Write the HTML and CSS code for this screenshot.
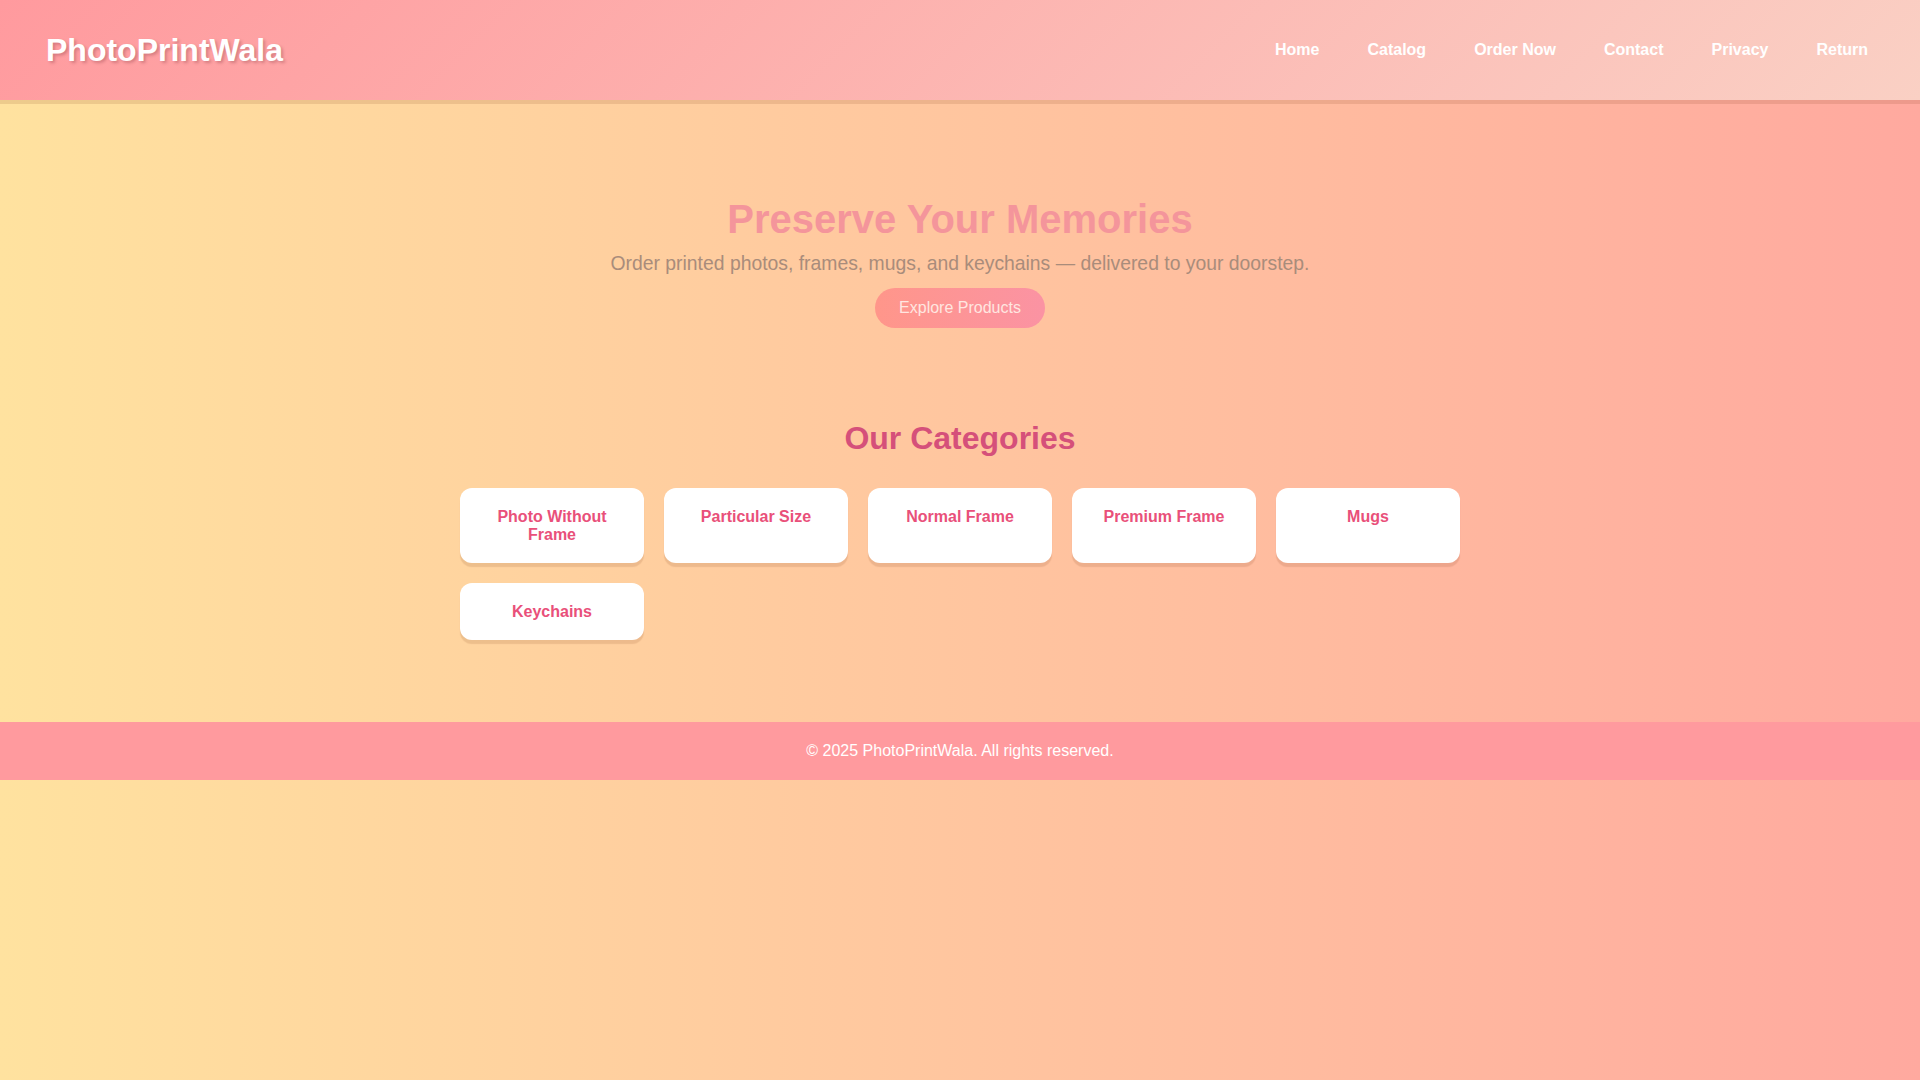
FILE: index.html
```html
<!DOCTYPE html>
<html lang="en">
<head>
<meta charset="utf-8">
<title>PhotoPrintWala</title>
<link rel="stylesheet" href="styles.css">
</head>
<body>
<header class="site-header">
  <div class="logo">PhotoPrintWala</div>
  <nav class="nav">
    <a href="#" class="nav-link">Home</a>
    <a href="#" class="nav-link">Catalog</a>
    <a href="#" class="nav-link">Order Now</a>
    <a href="#" class="nav-link">Contact</a>
    <a href="#" class="nav-link">Privacy</a>
    <a href="#" class="nav-link">Return</a>
  </nav>
</header>
<main>
  <section class="hero">
    <h1 class="hero-title">Preserve Your Memories</h1>
    <p class="hero-sub">Order printed photos, frames, mugs, and keychains — delivered to your doorstep.</p>
    <a href="#" class="hero-btn">Explore Products</a>
  </section>
  <section class="categories">
    <h2 class="cat-title">Our Categories</h2>
    <div class="cat-grid">
      <div class="cat-card">Photo Without Frame</div>
      <div class="cat-card">Particular Size</div>
      <div class="cat-card">Normal Frame</div>
      <div class="cat-card">Premium Frame</div>
      <div class="cat-card">Mugs</div>
      <div class="cat-card">Keychains</div>
    </div>
  </section>
</main>
<footer class="site-footer">© 2025 PhotoPrintWala. All rights reserved.</footer>
</body>
</html>
```
FILE: styles.css
```css
html, body {
  margin: 0;
  padding: 0;
}
body {
  font-family: "Liberation Sans", Arial, sans-serif;
  background: linear-gradient(to right, #ffe29f, #ffa99f);
  min-height: 100vh;
}
.site-header {
  height: 100px;
  box-sizing: border-box;
  padding: 0 40px 0 46px;
  display: flex;
  align-items: center;
  justify-content: space-between;
  background: linear-gradient(135deg, #ff9a9e, #fad0c4);
  box-shadow: 0 4px 0 rgba(110, 40, 10, 0.12);
}
.logo {
  font-size: 32px;
  font-weight: bold;
  color: #ffffff;
  text-shadow: 2px 2px 3px rgba(90, 20, 30, 0.25);
}
.nav {
  display: flex;
  gap: 24px;
}
.nav-link {
  padding: 0 12px;
  font-size: 16px;
  font-weight: bold;
  color: #ffffff;
  text-decoration: none;
}
.hero {
  display: flex;
  flex-direction: column;
  align-items: center;
  text-align: center;
  padding: 96.5px 20px 0;
}
.hero-title {
  margin: 0 0 10px;
  font-size: 40px;
  font-weight: bold;
  color: #f4959b;
}
.hero-sub {
  margin: 0 0 13px;
  font-size: 19.35px;
  color: #a98c7b;
}
.hero-btn {
  display: inline-block;
  padding: 11.2px 24px;
  border-radius: 30px;
  font-size: 16px;
  color: #ffe6e0;
  text-decoration: none;
  background: linear-gradient(to right, #ff968a, #fb93a3);
}
.categories {
  max-width: 1000px;
  margin: 0 auto;
  padding: 92px 0 81.5px;
}
.cat-title {
  margin: 0 0 31.5px;
  text-align: center;
  font-size: 32px;
  font-weight: bold;
  color: #d5507a;
}
.cat-grid {
  display: grid;
  grid-template-columns: repeat(auto-fill, minmax(180px, 1fr));
  gap: 20px;
}
.cat-card {
  background: #ffffff;
  border-radius: 12px;
  padding: 19.5px;
  text-align: center;
  font-size: 16px;
  font-weight: bold;
  color: #e9507a;
  box-shadow: 0 4px 1px rgba(110, 40, 10, 0.12);
}
.site-footer {
  background: #ff9a9e;
  padding: 20px;
  text-align: center;
  font-size: 16px;
  color: #ffffff;
}
```
